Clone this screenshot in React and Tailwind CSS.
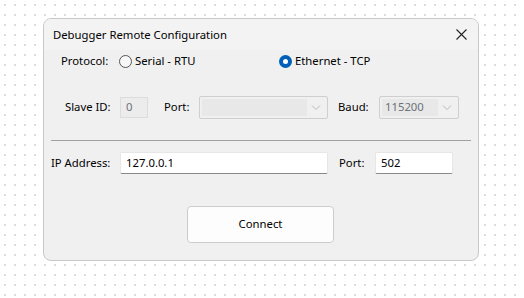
import React from "react";

function Chevron() {
  return (
    <svg width="10" height="6" viewBox="0 0 10 6" className="block">
      <path d="M1 0.5 L5 4.5 L9 0.5" fill="none" stroke="#b8b8b8" strokeWidth="1" />
    </svg>
  );
}

function Combo({ width, value }) {
  return (
    <div
      className={`${width} h-[23px] flex items-center border border-[#cfcfcf] bg-[#f0f0f0] rounded-[2px] p-[2px]`}
    >
      <div className="flex-1 h-full bg-[#e8e8e8] flex items-center pl-[3px] text-[#6d7178]">{value}</div>
      <div className="w-[18px] h-full flex items-center justify-center">
        <Chevron />
      </div>
    </div>
  );
}

export default function App() {
  return (
    <div
      className="w-[524px] h-[298px] bg-white bg-[radial-gradient(circle,#cfcfcf_0.6px,transparent_1px)] bg-[size:10px_10px] pt-[18px] pl-[43px] text-[11.3px] text-black"
      style={{ fontFamily: '"Noto Sans", "Open Sans", sans-serif' }}
    >
      <div className="w-[436px] h-[243px] border border-[#c8c8c8] rounded-[8px] overflow-hidden flex flex-col bg-[#f0f0f0]">
        {/* title bar */}
        <div className="h-[31px] bg-[#f3f3f3] flex items-center justify-between pl-[9px] pr-[9px]">
          <span className="leading-none">Debugger Remote Configuration</span>
          <svg width="11" height="11" viewBox="0 0 11 11" className="mr-[2px]">
            <path d="M0.5 0.5 L10.5 10.5 M10.5 0.5 L0.5 10.5" stroke="#222" strokeWidth="1.1" />
          </svg>
        </div>
        {/* body */}
        <div className="flex-1 flex flex-col">
          {/* protocol row */}
          <div className="h-[22px] flex items-center pl-[17px]">
            <span className="w-[58px]">Protocol:</span>
            <div className="w-[160px] flex items-center gap-[3px]">
              <span className="w-[13px] h-[13px] rounded-full border border-[#555] bg-[#f7f7f7]" />
              <span>Serial - RTU</span>
            </div>
            <div className="flex items-center gap-[3px]">
              <span className="w-[13px] h-[13px] rounded-full bg-[#005fb8] flex items-center justify-center">
                <span className="w-[5px] h-[5px] rounded-full bg-white" />
              </span>
              <span>Ethernet - TCP</span>
            </div>
          </div>
          {/* serial row */}
          <div className="mt-[24px] h-[23px] flex items-center pl-[21px]">
            <span className="w-[55px]">Slave ID:</span>
            <div className="w-[28px] h-[21px] border border-[#dcdcdc] bg-[#ececec] flex items-center pl-[5px] text-[#6d7178]">0</div>
            <span className="ml-[16px] w-[35px]">Port:</span>
            <Combo width="w-[129px]" value="" />
            <span className="ml-[10px] w-[41px]">Baud:</span>
            <Combo width="w-[80px]" value="115200" />
          </div>
          {/* separator */}
          <div className="mt-[21px] mx-[7px] h-px bg-[#a0a0a0]" />
          {/* ip row */}
          <div className="mt-[11px] h-[22px] flex items-center pl-[7px]">
            <span className="w-[69px]">IP Address:</span>
            <div className="w-[208px] h-[22px] bg-white border border-[#e6e6e6] border-b-[#8a8a8a] rounded-[2px] flex items-center pl-[5px]">127.0.0.1</div>
            <span className="ml-[11px] w-[36px]">Port:</span>
            <div className="w-[78px] h-[22px] bg-white border border-[#e6e6e6] border-b-[#8a8a8a] rounded-[2px] flex items-center pl-[5px]">502</div>
          </div>
          {/* button */}
          <div className="mt-[32px] flex pl-[143px]">
            <div className="w-[147px] h-[37px] bg-[#fdfdfd] border border-[#cccccc] rounded-[4px] flex items-center justify-center">
              Connect
            </div>
          </div>
        </div>
      </div>
    </div>
  );
}
